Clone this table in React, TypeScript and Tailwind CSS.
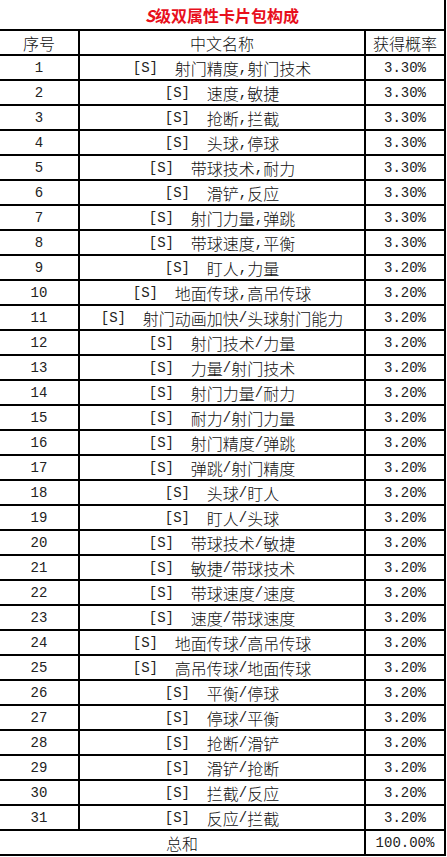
const rows: [string, string][] = [
  ['射门精度,射门技术', '3.30%'],
  ['速度,敏捷', '3.30%'],
  ['抢断,拦截', '3.30%'],
  ['头球,停球', '3.30%'],
  ['带球技术,耐力', '3.30%'],
  ['滑铲,反应', '3.30%'],
  ['射门力量,弹跳', '3.30%'],
  ['带球速度,平衡', '3.30%'],
  ['盯人,力量', '3.20%'],
  ['地面传球,高吊传球', '3.20%'],
  ['射门动画加快/头球射门能力', '3.20%'],
  ['射门技术/力量', '3.20%'],
  ['力量/射门技术', '3.20%'],
  ['射门力量/耐力', '3.20%'],
  ['耐力/射门力量', '3.20%'],
  ['射门精度/弹跳', '3.20%'],
  ['弹跳/射门精度', '3.20%'],
  ['头球/盯人', '3.20%'],
  ['盯人/头球', '3.20%'],
  ['带球技术/敏捷', '3.20%'],
  ['敏捷/带球技术', '3.20%'],
  ['带球速度/速度', '3.20%'],
  ['速度/带球速度', '3.20%'],
  ['地面传球/高吊传球', '3.20%'],
  ['高吊传球/地面传球', '3.20%'],
  ['平衡/停球', '3.20%'],
  ['停球/平衡', '3.20%'],
  ['抢断/滑铲', '3.20%'],
  ['滑铲/抢断', '3.20%'],
  ['拦截/反应', '3.20%'],
  ['反应/拦截', '3.20%'],
];

const cjk = "font-['Noto_Sans_CJK_SC',sans-serif] text-[16px] font-light";
const mono = "font-['Liberation_Mono','Noto_Sans_CJK_SC',monospace] text-[14px] text-[#222]";

// ascii separators get the half-width mono look, like the sheet's SimSun
function Name({ text }: { text: string }) {
  const parts = text.split(/([,/])/);
  return (
    <>
      {parts.map((s, i) =>
        s === ',' || s === '/' ? (
          <span key={i} className={mono}>{s}</span>
        ) : (
          <span key={i} className={cjk}>{s}</span>
        )
      )}
    </>
  );
}

export default function App() {
  return (
    <div className="w-[447px] h-[857px] bg-white text-[#111] overflow-hidden">
      <div className="w-[446px] border-r-2 border-b-2 border-black">
        <div className="h-[31px] flex items-center justify-center border-b-2 border-black">
          <span className="font-['Noto_Sans_CJK_SC',sans-serif] text-[16px] font-bold text-[#e8101c]">
            <span className="italic">S</span>级双属性卡片包构成
          </span>
        </div>
        <div className="h-[25px] grid grid-cols-[80px_286px_1fr] border-b-2 border-black">
          <div className={`flex items-center justify-center border-r-2 border-black ${cjk}`}>序号</div>
          <div className={`flex items-center justify-center border-r-2 border-black ${cjk}`}>中文名称</div>
          <div className={`flex items-center justify-center ${cjk}`}>获得概率</div>
        </div>
        {rows.map(([name, p], i) => (
          <div key={i} className="h-[25px] grid grid-cols-[80px_286px_1fr] border-b-2 border-black">
            <div className={`flex items-center justify-center border-r-2 border-black ${mono}`}>{i + 1}</div>
            <div className="flex items-center justify-center border-r-2 border-black whitespace-pre">
              <span className={mono}>[S]  </span>
              <Name text={name} />
            </div>
            <div className={`flex items-center justify-center ${mono}`}>{p}</div>
          </div>
        ))}
        <div className="h-[23px] grid grid-cols-[366px_1fr]">
          <div className={`flex items-center justify-center border-r-2 border-black ${cjk}`}>总和</div>
          <div className={`flex items-center justify-center ${mono}`}>100.00%</div>
        </div>
      </div>
    </div>
  );
}
